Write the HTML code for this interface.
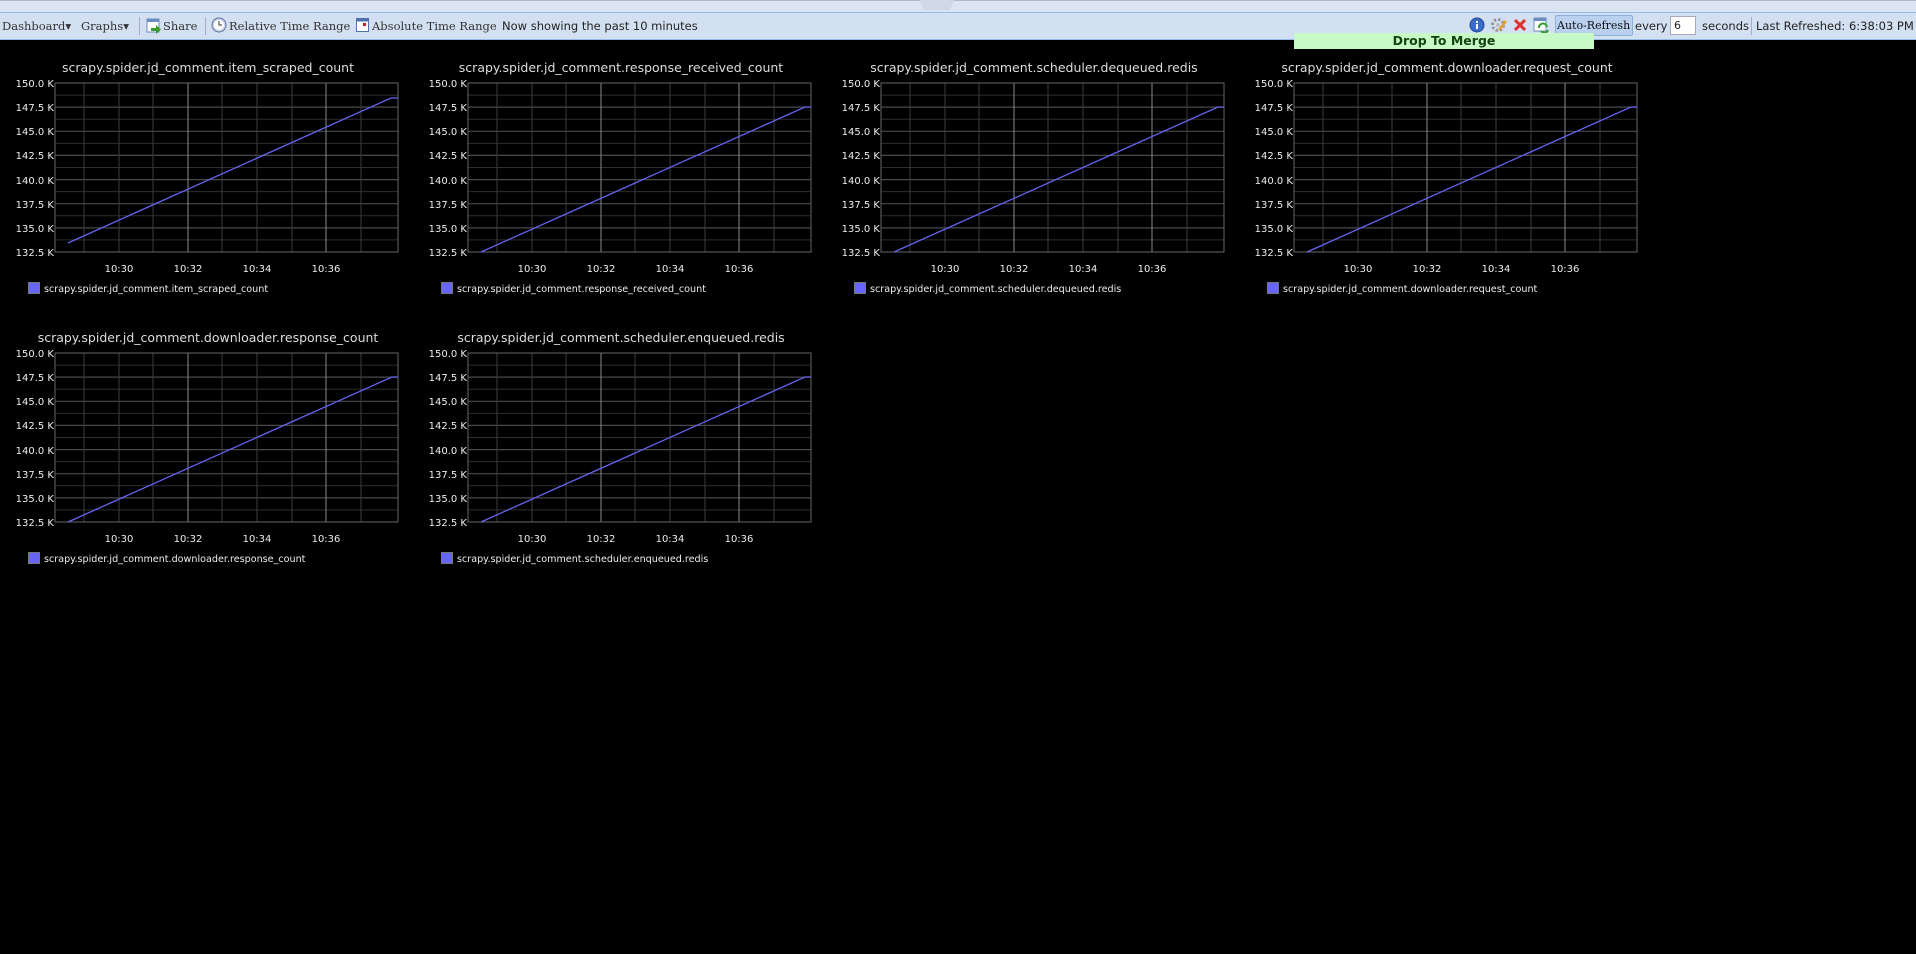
<!DOCTYPE html>
<html><head><meta charset="utf-8"><style>
html,body{margin:0;padding:0;width:1916px;height:954px;background:#000;overflow:hidden;font-family:"DejaVu Sans","Liberation Sans",sans-serif}
#strip{position:absolute;left:0;top:0;width:1916px;height:12px;background:#dbe5f2;border-top:1px solid #b0b8c4;box-sizing:border-box}
#tab{position:absolute;left:920px;top:0;width:34px;height:10px;background:#cfd9e6;clip-path:polygon(0 0,100% 0,88% 100%,12% 100%)}
#bar{position:absolute;left:0;top:12px;width:1916px;height:28px;background:#d3e0f1;border-top:1px solid #99bbe8;border-bottom:1px solid #99bbe8;box-sizing:border-box;font-size:11.5px;color:#222}
.t{position:absolute;top:6px;white-space:nowrap}
.s{font-family:"DejaVu Serif","Liberation Serif",serif;color:#333;letter-spacing:0;font-size:11.5px}
.sep{position:absolute;top:4px;width:1px;height:18px;background:#aac}
#dm{position:absolute;left:1294px;top:33px;width:300px;height:16px;background:#c8fac8;color:#114411;font-weight:bold;font-size:12.5px;text-align:center;line-height:16px}
#ar{position:absolute;left:1555px;top:2px;width:78px;height:21px;background:#b9d0ef;border:1px solid #8eb0dd;border-radius:2px;box-sizing:border-box}
#inp{position:absolute;left:1670px;top:3px;width:26px;height:19px;background:#fff;border:1px solid #aab;box-sizing:border-box;font-size:11px;padding:2px 3px}
</style></head><body>
<div id="strip"></div><div id="tab"></div>
<div id="bar">
<span class="t s" style="left:2px">Dashboard&#9662;</span>
<span class="t s" style="left:81px">Graphs&#9662;</span>
<div class="sep" style="left:139px"></div>
<svg style="position:absolute;left:146px;top:5px" width="16" height="16"><rect x="1" y="1" width="12" height="13" fill="#fff" stroke="#6a8cc0"/><rect x="1" y="1" width="12" height="3" fill="#6a8cc0"/><path d="M5 10h5v-3l5 4.5-5 4.5v-3H5z" fill="#3a9a2a"/></svg>
<span class="t s" style="left:163px">Share</span>
<div class="sep" style="left:205px"></div>
<svg style="position:absolute;left:211px;top:4px" width="16" height="16"><circle cx="8" cy="8" r="7" fill="#c8d4e8" stroke="#6070a0"/><circle cx="8" cy="8" r="5" fill="#fff"/><path d="M8 4v4h3" stroke="#333" fill="none"/></svg>
<span class="t s" style="left:229px">Relative Time Range</span>
<svg style="position:absolute;left:356px;top:5px" width="14" height="15"><rect x="0.5" y="0.5" width="12" height="13" fill="#fff" stroke="#5070b0"/><rect x="0.5" y="0.5" width="12" height="3" fill="#5070b0"/><rect x="7" y="5" width="3" height="3" fill="#c02020"/></svg>
<span class="t s" style="left:372px">Absolute Time Range</span>
<span class="t" style="left:502px">Now showing the past 10 minutes</span>
<svg style="position:absolute;left:1469px;top:4px" width="16" height="16"><circle cx="8" cy="8" r="7" fill="#3a6cc8" stroke="#1d4690"/><rect x="7" y="7" width="2" height="5" fill="#fff"/><rect x="7" y="4" width="2" height="2" fill="#fff"/></svg>
<svg style="position:absolute;left:1490px;top:3px" width="18" height="18"><circle cx="8" cy="9" r="5.5" fill="none" stroke="#999" stroke-width="3" stroke-dasharray="2.5 1.8"/><circle cx="8" cy="9" r="2" fill="#bbb"/><path d="M9 14l7-9" stroke="#e0a030" stroke-width="2.5"/></svg>
<svg style="position:absolute;left:1513px;top:5px" width="14" height="14"><path d="M2 2l10 10M12 2L2 12" stroke="#e03030" stroke-width="3"/></svg>
<svg style="position:absolute;left:1533px;top:3px" width="17" height="18"><rect x="1" y="2" width="12" height="13" fill="#fff" stroke="#6a8cc0"/><rect x="1" y="2" width="12" height="3" fill="#6a8cc0"/><path d="M6 12a4 4 0 0 1 8-1M15 14a4 4 0 0 1-7 1" stroke="#30a030" stroke-width="2" fill="none"/></svg>
<div id="ar"></div>
<span class="t s" style="left:1557px;color:#111;font-size:11px">Auto-Refresh</span>
<span class="t" style="left:1635px">every</span>
<div id="inp">6</div>
<span class="t" style="left:1702px">seconds</span>
<div class="sep" style="left:1751px"></div>
<span class="t" style="left:1756px">Last Refreshed: 6:38:03 PM</span>
</div>
<div id="dm">Drop To Merge</div>

<svg style="position:absolute;left:0;top:0" width="1916" height="954" font-family="DejaVu Sans, Liberation Sans, sans-serif">
<defs>
<g id="g">
<g stroke="#2e2e2e" stroke-width="1"><path d="M55 45.1H398M55 69.2H398M55 93.4H398M55 117.5H398M55 141.6H398M55 165.8H398M55 189.9H398"/></g>
<g stroke="#4a4a4a" stroke-width="1.2"><path d="M55 57.1H398M55 81.3H398M55 105.4H398M55 129.6H398M55 153.7H398M55 177.9H398"/></g>
<g stroke="#3c3c3c"><path d="M84 33V202M119 33V202M153 33V202M222 33V202M257 33V202M292 33V202M361 33V202"/></g>
<g stroke="#8a8a8a"><path d="M188 33V202M326 33V202"/></g>
<rect x="55" y="33" width="343" height="169" fill="none" stroke="#666"/>
<g fill="#eee" font-size="10" text-anchor="end">
<text x="54" y="37">150.0 K</text><text x="54" y="61">147.5 K</text><text x="54" y="85">145.0 K</text><text x="54" y="109">142.5 K</text><text x="54" y="134">140.0 K</text><text x="54" y="158">137.5 K</text><text x="54" y="182">135.0 K</text><text x="54" y="206">132.5 K</text>
</g>
<g fill="#eee" font-size="10" text-anchor="middle"><text x="119" y="222">10:30</text><text x="188" y="222">10:32</text><text x="257" y="222">10:34</text><text x="326" y="222">10:36</text></g>
<rect x="28.5" y="232.5" width="11" height="11" fill="#6666ff" stroke="#777"/>
</g>
<path id="ln" d="M68 202L392 57L398 57" fill="none" stroke="#6464f0" stroke-width="1.3"/>
</defs>
<g transform="translate(0,50)"><use href="#g"/><path d="M68 193L391 48L398 48" fill="none" stroke="#6464f0" stroke-width="1.3"/>
<text x="208" y="22" fill="#ddd" font-size="12.5" text-anchor="middle">scrapy.spider.jd_comment.item_scraped_count</text>
<text x="44" y="242" fill="#eee" font-size="9.6">scrapy.spider.jd_comment.item_scraped_count</text></g>
<g transform="translate(413,50)"><use href="#g"/><use href="#ln"/>
<text x="208" y="22" fill="#ddd" font-size="12.5" text-anchor="middle">scrapy.spider.jd_comment.response_received_count</text>
<text x="44" y="242" fill="#eee" font-size="9.6">scrapy.spider.jd_comment.response_received_count</text></g>
<g transform="translate(826,50)"><use href="#g"/><use href="#ln"/>
<text x="208" y="22" fill="#ddd" font-size="12.5" text-anchor="middle">scrapy.spider.jd_comment.scheduler.dequeued.redis</text>
<text x="44" y="242" fill="#eee" font-size="9.6">scrapy.spider.jd_comment.scheduler.dequeued.redis</text></g>
<g transform="translate(1239,50)"><use href="#g"/><use href="#ln"/>
<text x="208" y="22" fill="#ddd" font-size="12.5" text-anchor="middle">scrapy.spider.jd_comment.downloader.request_count</text>
<text x="44" y="242" fill="#eee" font-size="9.6">scrapy.spider.jd_comment.downloader.request_count</text></g>
<g transform="translate(0,320)"><use href="#g"/><use href="#ln"/>
<text x="208" y="22" fill="#ddd" font-size="12.5" text-anchor="middle">scrapy.spider.jd_comment.downloader.response_count</text>
<text x="44" y="242" fill="#eee" font-size="9.6">scrapy.spider.jd_comment.downloader.response_count</text></g>
<g transform="translate(413,320)"><use href="#g"/><use href="#ln"/>
<text x="208" y="22" fill="#ddd" font-size="12.5" text-anchor="middle">scrapy.spider.jd_comment.scheduler.enqueued.redis</text>
<text x="44" y="242" fill="#eee" font-size="9.6">scrapy.spider.jd_comment.scheduler.enqueued.redis</text></g>
</svg>
</body></html>
